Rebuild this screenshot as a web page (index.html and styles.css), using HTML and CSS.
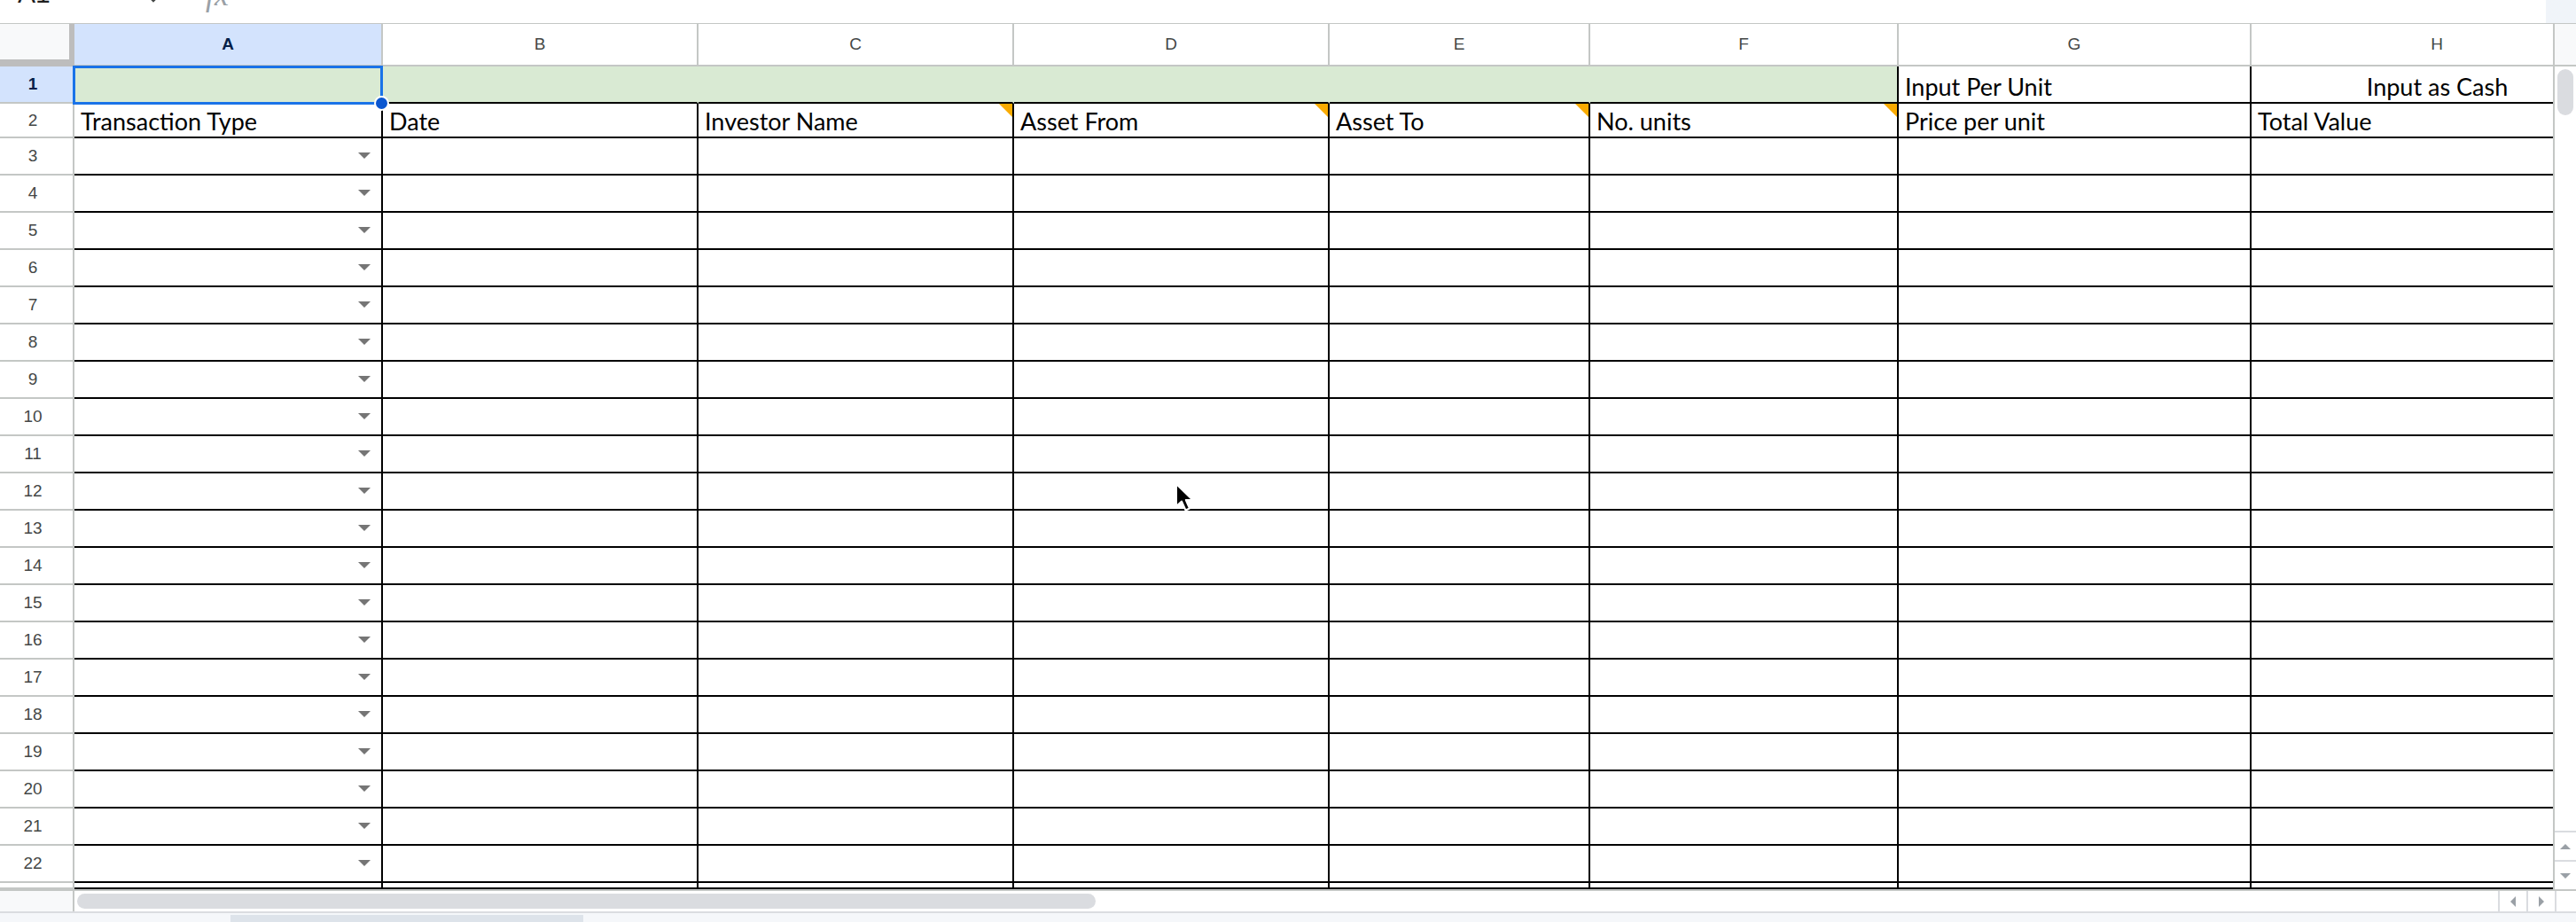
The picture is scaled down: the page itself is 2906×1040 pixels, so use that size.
FILE: index.html
```html
<!DOCTYPE html>
<html>
<head>
<meta charset="utf-8">
<link rel="stylesheet" href="styles.css">
</head>
<body>
<div class="app">
  <div class="fbar">
    <span class="namebox">A1</span>
    <svg class="chev" width="14" height="6" viewBox="0 0 14 6"><polyline points="2,-4 7,1 12,-4" fill="none" stroke="#444746" stroke-width="2.4"/></svg>
    <span class="fx">fx</span>
    <span class="fbar-fill"></span>
    <span class="fbar-side"></span>
  </div>
  <div class="main">
    <div class="viewport">
      <div class="row hdr">
        <div class="corner"></div>
        <div class="ch on">A</div><div class="ch">B</div><div class="ch">C</div><div class="ch">D</div><div class="ch">E</div><div class="ch">F</div><div class="ch">G</div><div class="ch">H</div>
      </div>
      <div class="row r1">
        <div class="rh on">1</div>
        <div class="c g nr"></div><div class="c g nr"></div><div class="c g nr"></div><div class="c g nr"></div><div class="c g nr"></div><div class="c g"></div>
        <div class="c">Input Per Unit</div><div class="c ctr">Input as Cash</div>
      </div>
      <div class="row r2">
        <div class="rh">2</div>
        <div class="c">Transaction Type</div><div class="c">Date</div><div class="c note">Investor Name</div><div class="c note">Asset From</div><div class="c note">Asset To</div><div class="c note">No. units</div><div class="c">Price per unit</div><div class="c">Total Value</div>
      </div>
      <div class="row"><div class="rh">3</div><div class="c dd"><i></i></div><div class="c"></div><div class="c"></div><div class="c"></div><div class="c"></div><div class="c"></div><div class="c"></div><div class="c"></div></div>
      <div class="row"><div class="rh">4</div><div class="c dd"><i></i></div><div class="c"></div><div class="c"></div><div class="c"></div><div class="c"></div><div class="c"></div><div class="c"></div><div class="c"></div></div>
      <div class="row"><div class="rh">5</div><div class="c dd"><i></i></div><div class="c"></div><div class="c"></div><div class="c"></div><div class="c"></div><div class="c"></div><div class="c"></div><div class="c"></div></div>
      <div class="row"><div class="rh">6</div><div class="c dd"><i></i></div><div class="c"></div><div class="c"></div><div class="c"></div><div class="c"></div><div class="c"></div><div class="c"></div><div class="c"></div></div>
      <div class="row"><div class="rh">7</div><div class="c dd"><i></i></div><div class="c"></div><div class="c"></div><div class="c"></div><div class="c"></div><div class="c"></div><div class="c"></div><div class="c"></div></div>
      <div class="row"><div class="rh">8</div><div class="c dd"><i></i></div><div class="c"></div><div class="c"></div><div class="c"></div><div class="c"></div><div class="c"></div><div class="c"></div><div class="c"></div></div>
      <div class="row"><div class="rh">9</div><div class="c dd"><i></i></div><div class="c"></div><div class="c"></div><div class="c"></div><div class="c"></div><div class="c"></div><div class="c"></div><div class="c"></div></div>
      <div class="row"><div class="rh">10</div><div class="c dd"><i></i></div><div class="c"></div><div class="c"></div><div class="c"></div><div class="c"></div><div class="c"></div><div class="c"></div><div class="c"></div></div>
      <div class="row"><div class="rh">11</div><div class="c dd"><i></i></div><div class="c"></div><div class="c"></div><div class="c"></div><div class="c"></div><div class="c"></div><div class="c"></div><div class="c"></div></div>
      <div class="row"><div class="rh">12</div><div class="c dd"><i></i></div><div class="c"></div><div class="c"></div><div class="c"></div><div class="c"></div><div class="c"></div><div class="c"></div><div class="c"></div></div>
      <div class="row"><div class="rh">13</div><div class="c dd"><i></i></div><div class="c"></div><div class="c"></div><div class="c"></div><div class="c"></div><div class="c"></div><div class="c"></div><div class="c"></div></div>
      <div class="row"><div class="rh">14</div><div class="c dd"><i></i></div><div class="c"></div><div class="c"></div><div class="c"></div><div class="c"></div><div class="c"></div><div class="c"></div><div class="c"></div></div>
      <div class="row"><div class="rh">15</div><div class="c dd"><i></i></div><div class="c"></div><div class="c"></div><div class="c"></div><div class="c"></div><div class="c"></div><div class="c"></div><div class="c"></div></div>
      <div class="row"><div class="rh">16</div><div class="c dd"><i></i></div><div class="c"></div><div class="c"></div><div class="c"></div><div class="c"></div><div class="c"></div><div class="c"></div><div class="c"></div></div>
      <div class="row"><div class="rh">17</div><div class="c dd"><i></i></div><div class="c"></div><div class="c"></div><div class="c"></div><div class="c"></div><div class="c"></div><div class="c"></div><div class="c"></div></div>
      <div class="row"><div class="rh">18</div><div class="c dd"><i></i></div><div class="c"></div><div class="c"></div><div class="c"></div><div class="c"></div><div class="c"></div><div class="c"></div><div class="c"></div></div>
      <div class="row"><div class="rh">19</div><div class="c dd"><i></i></div><div class="c"></div><div class="c"></div><div class="c"></div><div class="c"></div><div class="c"></div><div class="c"></div><div class="c"></div></div>
      <div class="row"><div class="rh">20</div><div class="c dd"><i></i></div><div class="c"></div><div class="c"></div><div class="c"></div><div class="c"></div><div class="c"></div><div class="c"></div><div class="c"></div></div>
      <div class="row"><div class="rh">21</div><div class="c dd"><i></i></div><div class="c"></div><div class="c"></div><div class="c"></div><div class="c"></div><div class="c"></div><div class="c"></div><div class="c"></div></div>
      <div class="row"><div class="rh">22</div><div class="c dd"><i></i></div><div class="c"></div><div class="c"></div><div class="c"></div><div class="c"></div><div class="c"></div><div class="c"></div><div class="c"></div></div>
      <div class="row r23"><div class="rh"></div><div class="c"></div><div class="c"></div><div class="c"></div><div class="c"></div><div class="c"></div><div class="c"></div><div class="c"></div><div class="c"></div></div>
      <div class="sel"><span class="handle"></span></div>
      <svg class="cursor" width="24" height="36" viewBox="0 0 24 36"><path d="M2 2 L2 27 L8 21.5 L12.5 31.5 L17 29.5 L12.8 20 L20.5 20 Z" fill="#000" stroke="#fff" stroke-width="2" stroke-linejoin="round"/></svg>
    </div>
    <div class="vscroll">
      <div class="vs-hdr"></div>
      <div class="vs-track"><div class="vs-thumb"></div></div>
      <div class="vs-btn"><i class="tri up"></i></div>
      <div class="vs-btn"><i class="tri down"></i></div>
    </div>
  </div>
  <div class="hbar">
    <div class="hb-left"></div>
    <div class="hb-track"><div class="hb-thumb"></div></div>
    <div class="hb-btn"><i class="tri left"></i></div>
    <div class="hb-btn"><i class="tri right"></i></div>
    <div class="hb-corner"></div>
  </div>
  <div class="tabs"><div class="tab"></div></div>
</div>
</body>
</html>
```

FILE: styles.css
```css
html, body {
  margin: 0;
  padding: 0;
  background: #ffffff;
}
body {
  width: 2906px;
  height: 1040px;
  overflow: hidden;
  font-family: "Liberation Sans", Arial, sans-serif;
}
.app {
  display: flex;
  flex-direction: column;
  width: 2906px;
  height: 1040px;
}

/* formula bar (cut off at top) */
.fbar {
  height: 26px;
  border-bottom: 1px solid #c4c7c5;
  display: flex;
  align-items: flex-start;
  overflow: hidden;
  background: #fff;
}
.namebox {
  margin-left: 20px;
  margin-top: -22px;
  font-size: 30px;
  line-height: 30px;
  color: #1f1f1f;
  width: 146px;
}
.chev {
  display: block;
  margin-top: 0;
}
.fx {
  margin-left: 52px;
  margin-top: -21px;
  font-family: "Liberation Serif", "DejaVu Serif", serif;
  font-style: italic;
  font-size: 36px;
  line-height: 30px;
  color: #9aa0a6;
}
.fbar-fill { flex: 1; }
.fbar-side {
  width: 34px;
  height: 26px;
  background: #f0f4f9;
}

/* main area */
.main {
  display: flex;
  height: 976px;
}
.viewport {
  position: relative;
  width: 2880px;
  overflow: hidden;
}
.row {
  display: grid;
  grid-template-columns: 84px 348px 356px 356px 356px 294px 348px 398px 420px;
  height: 42px;
  box-sizing: border-box;
}
.row.hdr { height: 48px; }
.row.r1 { height: 42px; }
.row.r2 { height: 39px; }
.row.r23 { height: 7px; }

.corner {
  background: #f8f9fa;
  border-right: 8px solid #bdbdbd;
  border-bottom: 8px solid #bdbdbd;
  margin-right: -2px;
}
.ch {
  display: flex;
  align-items: center;
  justify-content: center;
  border-right: 2px solid #c4c7c5;
  border-bottom: 2px solid #c4c7c5;
  font-size: 19px;
  color: #444746;
  background: #fff;
}
.ch.on {
  background: #d3e3fd;
  color: #041e49;
  font-weight: bold;
}
.rh {
  display: flex;
  align-items: center;
  justify-content: center;
  padding-right: 8px;
  border-right: 2px solid #c4c7c5;
  border-bottom: 2px solid #c4c7c5;
  font-size: 19px;
  color: #444746;
  background: #fff;
  box-sizing: border-box;
}
.rh.on {
  background: #d3e3fd;
  color: #041e49;
  font-weight: bold;
}

.c {
  position: relative;
  display: flex;
  align-items: flex-end;
  padding: 0 6px 1px 7px;
  border-right: 2px solid #000;
  border-bottom: 2px solid #000;
  font-family: "Lato", "Open Sans", sans-serif;
  font-size: 27px;
  line-height: 32px;
  color: #000;
  white-space: nowrap;
  overflow: hidden;
  box-sizing: border-box;
}
.c.g { background: #d9ead3; }
.c.nr { border-right-color: #d9ead3; }
.c.ctr { justify-content: center; }
.c.note::after {
  content: "";
  position: absolute;
  top: 0;
  right: 0;
  width: 0;
  height: 0;
  border-top: 15px solid #f9ab00;
  border-left: 15px solid transparent;
}
.c.dd {
  align-items: center;
  justify-content: flex-end;
  padding-right: 12px;
}
.c.dd i {
  display: block;
  width: 0;
  height: 0;
  border-left: 7px solid transparent;
  border-right: 7px solid transparent;
  border-top: 7px solid #757575;
}

/* selection */
.sel {
  position: absolute;
  left: 82px;
  top: 47px;
  width: 350px;
  height: 44px;
  border: 3px solid #1a73e8;
  box-sizing: border-box;
}
.handle {
  position: absolute;
  right: -10px;
  bottom: -10px;
  width: 13px;
  height: 13px;
  border-radius: 50%;
  background: #0b57d0;
  border: 2px solid #fff;
}
.cursor {
  position: absolute;
  left: 1325px;
  top: 517px;
}

/* vertical scrollbar */
.vscroll {
  width: 26px;
  display: flex;
  flex-direction: column;
  border-left: 2px solid #c4c7c5;
  box-sizing: border-box;
  background: #fff;
}
.vs-hdr {
  height: 46px;
  background: #f8f9fa;
  border-bottom: 2px solid #c4c7c5;
}
.vs-track { flex: 1; }
.vs-thumb {
  margin: 3px 0 0 3px;
  width: 18px;
  height: 52px;
  border-radius: 9px;
  background: #dadce0;
}
.vs-btn {
  height: 31px;
  border-top: 2px solid #dadce0;
  display: flex;
  align-items: center;
  justify-content: center;
}
.tri {
  display: block;
  width: 0;
  height: 0;
}
.tri.up {
  border-left: 6px solid transparent;
  border-right: 6px solid transparent;
  border-bottom: 6px solid #9aa0a6;
}
.tri.down {
  border-left: 6px solid transparent;
  border-right: 6px solid transparent;
  border-top: 6px solid #9aa0a6;
}
.tri.left {
  border-top: 6px solid transparent;
  border-bottom: 6px solid transparent;
  border-right: 6px solid #9aa0a6;
}
.tri.right {
  border-top: 6px solid transparent;
  border-bottom: 6px solid transparent;
  border-left: 6px solid #9aa0a6;
}

/* horizontal scrollbar */
.hbar {
  height: 27px;
  display: flex;
  border-top: 2px solid #c4c7c5;
  border-bottom: 2px solid #dadce0;
  box-sizing: border-box;
  background: #fff;
}
.hb-left {
  width: 84px;
  border-right: 2px solid #c4c7c5;
  box-sizing: border-box;
  background: #f8f9fa;
}
.hb-track {
  flex: 1;
  display: flex;
  align-items: center;
}
.hb-thumb {
  margin-left: 3px;
  width: 1149px;
  height: 17px;
  border-radius: 9px;
  background: #dadce0;
}
.hb-btn {
  width: 32px;
  border-left: 2px solid #dadce0;
  box-sizing: border-box;
  display: flex;
  align-items: center;
  justify-content: center;
}
.hb-corner {
  width: 24px;
  border-left: 2px solid #dadce0;
  box-sizing: border-box;
}

/* sheet tabs strip */
.tabs {
  flex: 1;
  background: #f5f7fa;
  display: flex;
}
.tab {
  margin: 2px 0 0 260px;
  width: 398px;
  background: #dde3ea;
}
```
